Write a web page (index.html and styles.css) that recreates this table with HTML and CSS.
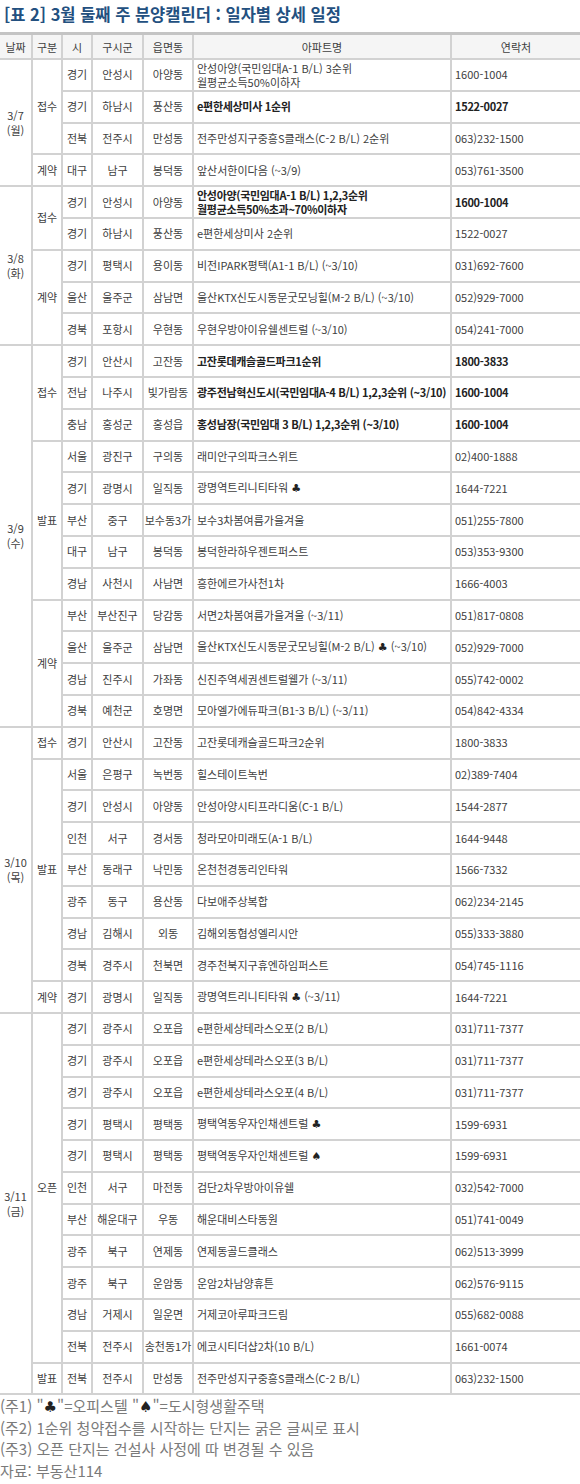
FILE: index.html
```html
<!DOCTYPE html>
<html lang="ko">
<head>
<meta charset="utf-8">
<title>3월 둘째 주 분양캘린더</title>
<link rel="stylesheet" href="styles.css">
</head>
<body>
<h1 class="title">[표 2] 3월 둘째 주 분양캘린더 : 일자별 상세 일정</h1>
<table class="cal">
<colgroup>
<col class="c-date"><col class="c-type"><col class="c-si"><col class="c-gu"><col class="c-dong"><col class="c-apt"><col class="c-tel">
</colgroup>
<thead>
<tr><th>날짜</th><th>구분</th><th>시</th><th>구시군</th><th>읍면동</th><th>아파트명</th><th>연락처</th></tr>
</thead>
<tbody class="grp">
<tr><td class="date" rowspan="4">3/7<br>(월)</td><td class="type" rowspan="3">접수</td><td>경기</td><td>안성시</td><td>아양동</td><td class="apt two">안성아양(국민임대A-1 B/L) 3순위<br>월평균소득50%이하자</td><td class="tel">1600-1004</td></tr>
<tr class="b"><td>경기</td><td>하남시</td><td>풍산동</td><td class="apt">e편한세상미사 1순위</td><td class="tel">1522-0027</td></tr>
<tr><td>전북</td><td>전주시</td><td>만성동</td><td class="apt">전주만성지구중흥S클래스(C-2 B/L) 2순위</td><td class="tel">063)232-1500</td></tr>
<tr><td class="type">계약</td><td>대구</td><td>남구</td><td>봉덕동</td><td class="apt">앞산서한이다음 (~3/9)</td><td class="tel">053)761-3500</td></tr>
</tbody>
<tbody class="grp">
<tr class="b"><td class="date" rowspan="5">3/8<br>(화)</td><td class="type" rowspan="2">접수</td><td>경기</td><td>안성시</td><td>아양동</td><td class="apt two">안성아양(국민임대A-1 B/L) 1,2,3순위<br>월평균소득50%초과~70%이하자</td><td class="tel">1600-1004</td></tr>
<tr><td>경기</td><td>하남시</td><td>풍산동</td><td class="apt">e편한세상미사 2순위</td><td class="tel">1522-0027</td></tr>
<tr><td class="type" rowspan="3">계약</td><td>경기</td><td>평택시</td><td>용이동</td><td class="apt">비전IPARK평택(A1-1 B/L) (~3/10)</td><td class="tel">031)692-7600</td></tr>
<tr><td>울산</td><td>울주군</td><td>삼남면</td><td class="apt">울산KTX신도시동문굿모닝힐(M-2 B/L) (~3/10)</td><td class="tel">052)929-7000</td></tr>
<tr><td>경북</td><td>포항시</td><td>우현동</td><td class="apt">우현우방아이유쉘센트럴 (~3/10)</td><td class="tel">054)241-7000</td></tr>
</tbody>
<tbody class="grp">
<tr class="b"><td class="date" rowspan="12">3/9<br>(수)</td><td class="type" rowspan="3">접수</td><td>경기</td><td>안산시</td><td>고잔동</td><td class="apt">고잔롯데캐슬골드파크1순위</td><td class="tel">1800-3833</td></tr>
<tr class="b"><td>전남</td><td>나주시</td><td>빛가람동</td><td class="apt">광주전남혁신도시(국민임대A-4 B/L) 1,2,3순위 (~3/10)</td><td class="tel">1600-1004</td></tr>
<tr class="b"><td>충남</td><td>홍성군</td><td>홍성읍</td><td class="apt">홍성남장(국민임대 3 B/L) 1,2,3순위 (~3/10)</td><td class="tel">1600-1004</td></tr>
<tr><td class="type" rowspan="5">발표</td><td>서울</td><td>광진구</td><td>구의동</td><td class="apt">래미안구의파크스위트</td><td class="tel">02)400-1888</td></tr>
<tr><td>경기</td><td>광명시</td><td>일직동</td><td class="apt">광명역트리니티타워 <span class="sym">♣</span></td><td class="tel">1644-7221</td></tr>
<tr><td>부산</td><td>중구</td><td>보수동3가</td><td class="apt">보수3차봄여름가을겨울</td><td class="tel">051)255-7800</td></tr>
<tr><td>대구</td><td>남구</td><td>봉덕동</td><td class="apt">봉덕한라하우젠트퍼스트</td><td class="tel">053)353-9300</td></tr>
<tr><td>경남</td><td>사천시</td><td>사남면</td><td class="apt">흥한에르가사천1차</td><td class="tel">1666-4003</td></tr>
<tr><td class="type" rowspan="4">계약</td><td>부산</td><td>부산진구</td><td>당감동</td><td class="apt">서면2차봄여름가을겨울 (~3/11)</td><td class="tel">051)817-0808</td></tr>
<tr><td>울산</td><td>울주군</td><td>삼남면</td><td class="apt">울산KTX신도시동문굿모닝힐(M-2 B/L) <span class="sym">♣</span> (~3/10)</td><td class="tel">052)929-7000</td></tr>
<tr><td>경남</td><td>진주시</td><td>가좌동</td><td class="apt">신진주역세권센트럴웰가 (~3/11)</td><td class="tel">055)742-0002</td></tr>
<tr><td>경북</td><td>예천군</td><td>호명면</td><td class="apt">모아엘가에듀파크(B1-3 B/L) (~3/11)</td><td class="tel">054)842-4334</td></tr>
</tbody>
<tbody class="grp">
<tr><td class="date" rowspan="9">3/10<br>(목)</td><td class="type">접수</td><td>경기</td><td>안산시</td><td>고잔동</td><td class="apt">고잔롯데캐슬골드파크2순위</td><td class="tel">1800-3833</td></tr>
<tr><td class="type" rowspan="7">발표</td><td>서울</td><td>은평구</td><td>녹번동</td><td class="apt">힐스테이트녹번</td><td class="tel">02)389-7404</td></tr>
<tr><td>경기</td><td>안성시</td><td>아양동</td><td class="apt">안성아양시티프라디움(C-1 B/L)</td><td class="tel">1544-2877</td></tr>
<tr><td>인천</td><td>서구</td><td>경서동</td><td class="apt">청라모아미래도(A-1 B/L)</td><td class="tel">1644-9448</td></tr>
<tr><td>부산</td><td>동래구</td><td>낙민동</td><td class="apt">온천천경동리인타워</td><td class="tel">1566-7332</td></tr>
<tr><td>광주</td><td>동구</td><td>용산동</td><td class="apt">다보애주상복합</td><td class="tel">062)234-2145</td></tr>
<tr><td>경남</td><td>김해시</td><td>외동</td><td class="apt">김해외동협성엘리시안</td><td class="tel">055)333-3880</td></tr>
<tr><td>경북</td><td>경주시</td><td>천북면</td><td class="apt">경주천북지구휴엔하임퍼스트</td><td class="tel">054)745-1116</td></tr>
<tr><td class="type">계약</td><td>경기</td><td>광명시</td><td>일직동</td><td class="apt">광명역트리니티타워 <span class="sym">♣</span> (~3/11)</td><td class="tel">1644-7221</td></tr>
</tbody>
<tbody class="grp">
<tr><td class="date" rowspan="12">3/11<br>(금)</td><td class="type" rowspan="11">오픈</td><td>경기</td><td>광주시</td><td>오포읍</td><td class="apt">e편한세상테라스오포(2 B/L)</td><td class="tel">031)711-7377</td></tr>
<tr><td>경기</td><td>광주시</td><td>오포읍</td><td class="apt">e편한세상테라스오포(3 B/L)</td><td class="tel">031)711-7377</td></tr>
<tr><td>경기</td><td>광주시</td><td>오포읍</td><td class="apt">e편한세상테라스오포(4 B/L)</td><td class="tel">031)711-7377</td></tr>
<tr><td>경기</td><td>평택시</td><td>평택동</td><td class="apt">평택역동우자인채센트럴 <span class="sym">♣</span></td><td class="tel">1599-6931</td></tr>
<tr><td>경기</td><td>평택시</td><td>평택동</td><td class="apt">평택역동우자인채센트럴 <span class="sym">♠</span></td><td class="tel">1599-6931</td></tr>
<tr><td>인천</td><td>서구</td><td>마전동</td><td class="apt">검단2차우방아이유쉘</td><td class="tel">032)542-7000</td></tr>
<tr><td>부산</td><td>해운대구</td><td>우동</td><td class="apt">해운대비스타동원</td><td class="tel">051)741-0049</td></tr>
<tr><td>광주</td><td>북구</td><td>연제동</td><td class="apt">연제동골드클래스</td><td class="tel">062)513-3999</td></tr>
<tr><td>광주</td><td>북구</td><td>운암동</td><td class="apt">운암2차남양휴튼</td><td class="tel">062)576-9115</td></tr>
<tr><td>경남</td><td>거제시</td><td>일운면</td><td class="apt">거제코아루파크드림</td><td class="tel">055)682-0088</td></tr>
<tr><td>전북</td><td>전주시</td><td>송천동1가</td><td class="apt">에코시티더샵2차(10 B/L)</td><td class="tel">1661-0074</td></tr>
<tr><td class="type">발표</td><td>전북</td><td>전주시</td><td>만성동</td><td class="apt">전주만성지구중흥S클래스(C-2 B/L)</td><td class="tel">063)232-1500</td></tr>
</tbody>
</table>
<div class="notes">
<p>(주1) "<span class="sym">♣</span>"=오피스텔 "<span class="sym">♠</span>"=도시형생활주택</p>
<p>(주2) 1순위 청약접수를 시작하는 단지는 굵은 글씨로 표시</p>
<p>(주3) 오픈 단지는 건설사 사정에 따 변경될 수 있음</p>
<p>자료: 부동산114</p>
</div>
</body>
</html>
```

FILE: styles.css
```css
html, body {
  margin: 0;
  padding: 0;
  background: #ffffff;
}
body {
  width: 580px;
  font-family: "Noto Sans CJK KR", "Noto Sans", sans-serif;
  color: #404040;
}
.title {
  margin: 0;
  padding: 2px 0 0 4px;
  height: 32px;
  box-sizing: border-box;
  font-size: 16.5px;
  line-height: 24px;
  font-weight: 700;
  color: #23507f;
  letter-spacing: 0;
}
.cal {
  width: 580px;
  border-collapse: collapse;
  table-layout: fixed;
  font-size: 11px;
}
.c-date { width: 32px; }
.c-type { width: 30px; }
.c-si { width: 30px; }
.c-gu { width: 51px; }
.c-dong { width: 50px; }
.c-apt { width: 258px; }
.c-tel { width: 129px; }
.cal th {
  height: 23px;
  padding: 0;
  font-weight: 400;
  background: #f5f5f5;
  color: #404040;
  border: 2px solid #d2d2d2;
  border-top: 3px solid #c4c4c4;
}
.cal th:first-child { border-left: none; }
.cal th:last-child { border-right: none; }
.cal td {
  height: 29.8px;
  padding: 0;
  text-align: center;
  vertical-align: middle;
  line-height: 13px;
  border: 2px solid #d2d2d2;
  white-space: nowrap;
}
.cal td.date {
  border-left: none;
  line-height: 15px;
}
.cal td.tel {
  border-right: none;
  text-align: left;
  padding-left: 3px;
}
.cal td.apt {
  text-align: left;
  padding-left: 3px;
}
.cal td.two {
  line-height: 14px;
}
.cal tr.b td.apt,
.cal tr.b td.tel {
  font-weight: 700;
  color: #222222;
  letter-spacing: -0.3px;
}
.sym {
  color: #222222;
  font-family: "DejaVu Sans", sans-serif;
}
.notes {
  color: #7a7a7a;
  font-size: 15px;
  line-height: 21px;
}
.notes p {
  margin: 0;
  height: 21.5px;
}
```
